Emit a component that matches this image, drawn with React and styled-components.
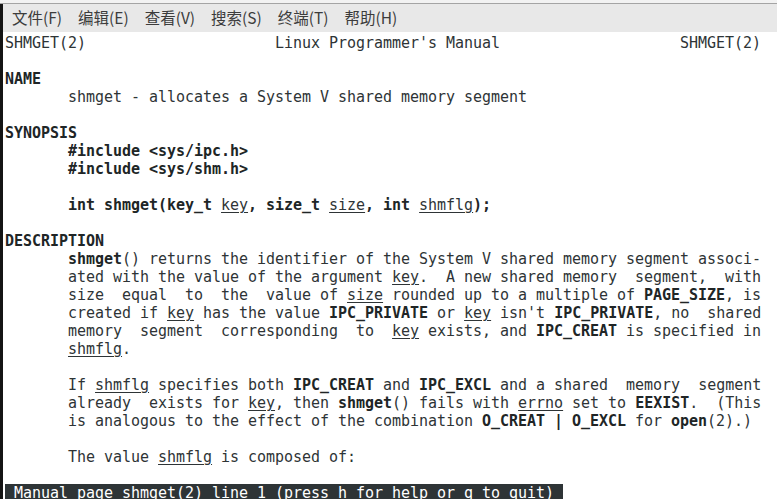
import React from "react";
import styled, { createGlobalStyle } from "styled-components";

const Global = createGlobalStyle`
  html, body {
    margin: 0;
    padding: 0;
    background: #ffffff;
    overflow: hidden;
  }
`;

const Window = styled.div`
  width: 777px;
  height: 499px;
  overflow: hidden;
  display: flex;
  flex-direction: column;
  background: #ffffff;
`;

const TopEdge = styled.div`
  height: 3px;
  background: #f2f2f2;
  border-bottom: 1px solid #a4a4a4;
  flex: none;
`;

const Body = styled.div`
  flex: 1;
  display: flex;
  min-height: 0;
`;

const LeftEdge = styled.div`
  width: 3px;
  flex: none;
  background: #141414;
`;

const Main = styled.div`
  flex: 1;
  display: flex;
  flex-direction: column;
  min-width: 0;
`;

const MenuBar = styled.nav`
  height: 28px;
  flex: none;
  display: flex;
  align-items: center;
  padding: 0 0 2px 1px;
  box-sizing: border-box;
  background: #e8e8e8;
`;

const MenuItem = styled.span`
  padding: 0 8px;
  font-family: "Noto Sans CJK SC", "Noto Sans", sans-serif;
  font-size: 15.5px;
  color: #3c3c3c;
  line-height: 20px;
`;

const Terminal = styled.div`
  flex: 1;
  padding: 2px 0 0 2px;
  font-family: "DejaVu Sans Mono", monospace;
  font-size: 15px;
  letter-spacing: -0.03px;
  color: #2e3436;
  background: #ffffff;
`;

const Line = styled.div`
  height: 18px;
  line-height: 18px;
  white-space: pre;
`;

const B = styled.b`
  font-weight: 700;
  color: #202526;
`;

const U = styled.span`
  text-decoration: underline;
  text-decoration-thickness: 1px;
  text-underline-offset: 2px;
`;

const Status = styled.span`
  background: #2e3436;
  color: #ffffff;
`;

const I = "       ";

const menus = ["文件(F)", "编辑(E)", "查看(V)", "搜索(S)", "终端(T)", "帮助(H)"];

export default function App() {
  return (
    <Window>
      <Global />
      <TopEdge />
      <Body>
        <LeftEdge />
        <Main>
          <MenuBar>
            {menus.map((m) => (
              <MenuItem key={m}>{m}</MenuItem>
            ))}
          </MenuBar>
          <Terminal>
            <Line>{"SHMGET(2)                     Linux Programmer's Manual                    SHMGET(2)"}</Line>
            <Line />
            <Line><B>NAME</B></Line>
            <Line>{I}shmget - allocates a System V shared memory segment</Line>
            <Line />
            <Line><B>SYNOPSIS</B></Line>
            <Line>{I}<B>#include &lt;sys/ipc.h&gt;</B></Line>
            <Line>{I}<B>#include &lt;sys/shm.h&gt;</B></Line>
            <Line />
            <Line>
              {I}<B>int shmget(key_t </B><U>key</U><B>, size_t </B><U>size</U>
              <B>, int </B><U>shmflg</U><B>);</B>
            </Line>
            <Line />
            <Line><B>DESCRIPTION</B></Line>
            <Line>
              {I}<B>shmget</B>() returns the identifier of the System V shared memory segment associ-
            </Line>
            <Line>
              {I}ated with the value of the argument <U>key</U>.{"  A new shared memory  segment,  with"}
            </Line>
            <Line>
              {I}{"size  equal  to  the  value of "}<U>size</U> rounded up to a multiple of <B>PAGE_SIZE</B>, is
            </Line>
            <Line>
              {I}created if <U>key</U> has the value <B>IPC_PRIVATE</B> or <U>key</U> isn't <B>IPC_PRIVATE</B>{", no  shared"}
            </Line>
            <Line>
              {I}{"memory  segment  corresponding  to  "}<U>key</U> exists, and <B>IPC_CREAT</B> is specified in
            </Line>
            <Line>{I}<U>shmflg</U>.</Line>
            <Line />
            <Line>
              {I}If <U>shmflg</U> specifies both <B>IPC_CREAT</B> and <B>IPC_EXCL</B>{" and a shared  memory  segment"}
            </Line>
            <Line>
              {I}{"already  exists for "}<U>key</U>, then <B>shmget</B>() fails with <U>errno</U> set to <B>EEXIST</B>{".  (This"}
            </Line>
            <Line>
              {I}is analogous to the effect of the combination <B>O_CREAT | O_EXCL</B> for <B>open</B>(2).)
            </Line>
            <Line />
            <Line>{I}The value <U>shmflg</U> is composed of:</Line>
            <Line />
            <Line><Status>{" Manual page shmget(2) line 1 (press h for help or q to quit) "}</Status></Line>
          </Terminal>
        </Main>
      </Body>
    </Window>
  );
}
